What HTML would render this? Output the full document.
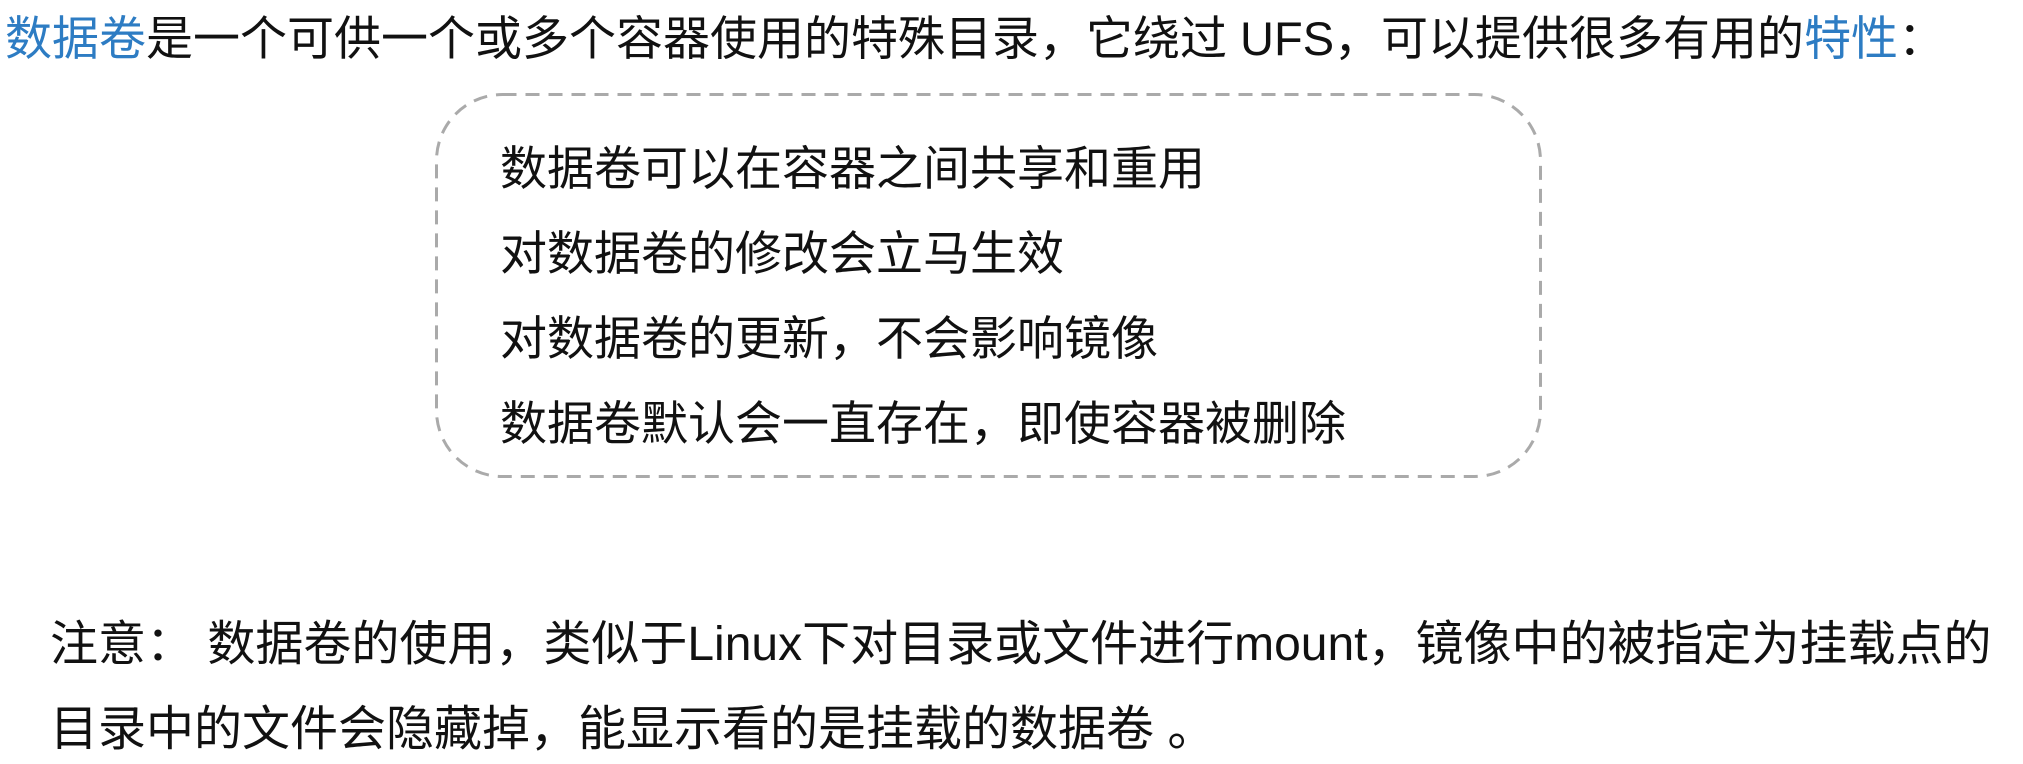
<!DOCTYPE html>
<html><head><meta charset="utf-8"><style>
body{margin:0;width:2023px;height:764px;background:#fff;overflow:hidden;position:relative;font-family:"Liberation Sans","Noto Sans CJK SC",sans-serif;color:#111;}
.t{position:absolute;white-space:nowrap;font-size:47px;line-height:60px;}
.b{color:#2d7cc3;}
svg{position:absolute;left:0;top:0;}
</style></head><body>
<svg width="2023" height="764"><rect x="436.5" y="94.5" width="1104" height="382" rx="66" ry="66" fill="none" stroke="#aaa" stroke-width="3" stroke-dasharray="14 9"/></svg>
<div class="t" style="left:5px;top:9px;"><span class="b">数据卷</span>是一个可供一个或多个容器使用的特殊目录，它绕过 UFS，可以提供很多有用的<span class="b">特性</span>：</div>
<div class="t" style="left:500px;top:139px;">数据卷可以在容器之间共享和重用</div>
<div class="t" style="left:500px;top:224px;">对数据卷的修改会立马生效</div>
<div class="t" style="left:500px;top:309px;">对数据卷的更新，不会影响镜像</div>
<div class="t" style="left:500px;top:394px;">数据卷默认会一直存在，即使容器被删除</div>
<div class="t" style="left:50px;top:615px;font-size:48px;">注意： 数据卷的使用，类似于Linux下对目录或文件进行mount，镜像中的被指定为挂载点的</div>
<div class="t" style="left:50px;top:700px;font-size:48px;">目录中的文件会隐藏掉，能显示看的是挂载的数据卷 。</div>
</body></html>
